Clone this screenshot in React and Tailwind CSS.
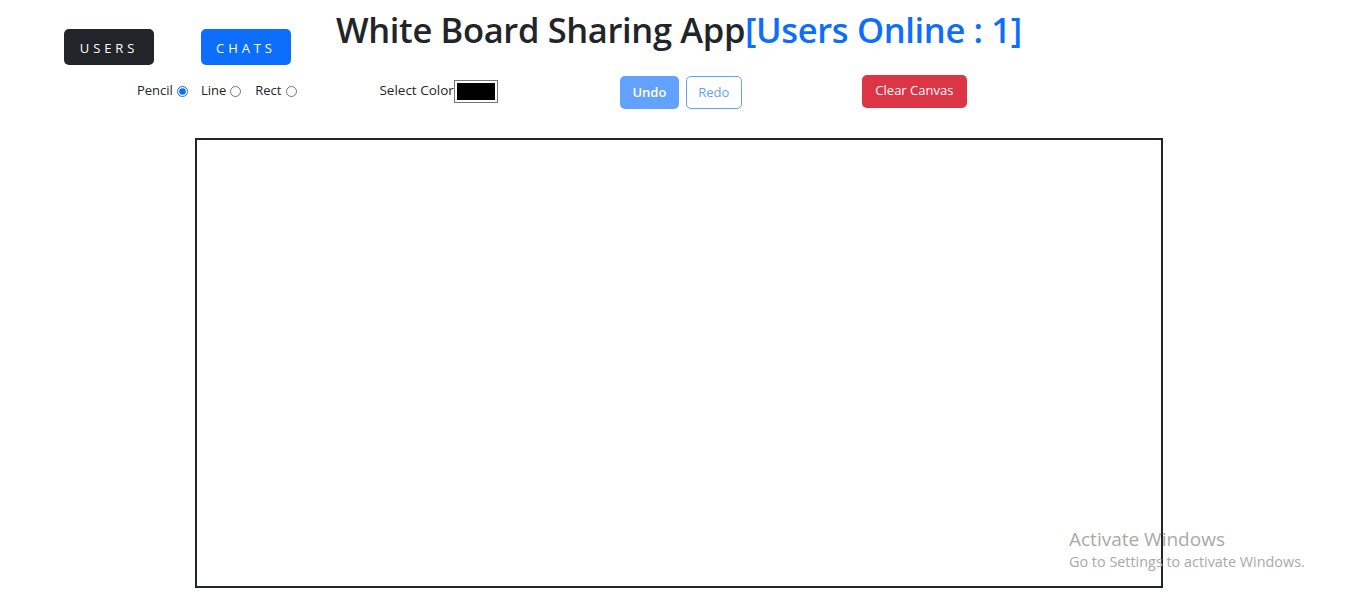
import React, { useState } from "react";

const font = { fontFamily: '"Open Sans", "Noto Sans", sans-serif' };

const App = () => {
  const [tool, setTool] = useState("pencil");
  const usersOnline = 1;

  return (
    <div className="relative min-h-[601px] bg-white text-[#212529]" style={font}>
      {/* top row */}
      <div className="flex items-start pl-[64px]">
        <button className="mt-[29px] h-[36px] w-[90px] rounded-[5px] bg-[#212529] pt-[3px] text-[13px] tracking-[0.3em] text-white">
          USERS
        </button>
        <button className="ml-[47px] mt-[29px] h-[36px] w-[90px] rounded-[5px] bg-[#0d6efd] pt-[3px] text-[13px] tracking-[0.3em] text-white">
          CHATS
        </button>
        <h1 className="ml-[45px] mt-[6px] text-[34.5px] leading-[48px] font-semibold tracking-[-0.01em]">
          White Board Sharing App
          <span className="text-[#0d6efd]">[Users Online : {usersOnline}]</span>
        </h1>
      </div>

      {/* tools row */}
      <div className="mt-[8px] flex h-[36px] items-center pl-[137px] text-[13px]">
        <label className="flex items-center">
          Pencil
          <input
            type="radio"
            name="tool"
            checked={tool === "pencil"}
            onChange={() => setTool("pencil")}
            className="ml-[4px] h-[11px] w-[11px] accent-[#0d6efd]"
          />
        </label>
        <label className="ml-[13px] flex items-center">
          Line
          <input
            type="radio"
            name="tool"
            checked={tool === "line"}
            onChange={() => setTool("line")}
            className="ml-[4px] h-[11px] w-[11px] accent-[#0d6efd]"
          />
        </label>
        <label className="ml-[14px] flex items-center">
          Rect
          <input
            type="radio"
            name="tool"
            checked={tool === "rect"}
            onChange={() => setTool("rect")}
            className="ml-[5px] h-[11px] w-[11px] accent-[#0d6efd]"
          />
        </label>
        <div className="ml-[82px] flex items-center">
          <span className="text-[13.5px] -translate-y-[1px]">Select Color</span>
          <div className="h-[23px] w-[44px] border border-[#767676] bg-white p-[2px]">
            <div className="h-full w-full bg-black" />
          </div>
        </div>
        <button
          disabled
          className="ml-[122px] mt-[3px] h-[33px] w-[59px] rounded-[5px] bg-[#62a1fe] text-[13px] font-semibold text-white"
        >
          Undo
        </button>
        <button
          disabled
          className="ml-[7px] mt-[3px] h-[33px] w-[56px] rounded-[5px] border border-[#62a1fe] bg-white text-[13px] text-[#62a1fe]"
        >
          Redo
        </button>
        <button className="ml-[120px] h-[33px] w-[105px] rounded-[5px] bg-[#dc3545] text-[13px] text-white">
          Clear Canvas
        </button>
      </div>

      {/* canvas */}
      <div className="mt-[29px] pl-[195px]">
        <div className="h-[450px] w-[968px] border-2 border-[#212529] bg-white" />
      </div>

      {/* windows watermark */}
      <div className="pointer-events-none absolute left-[1069px] top-[527px] text-[#a9a9a9]">
        <div className="text-[19px] leading-[25px]">Activate Windows</div>
        <div className="text-[14.4px] leading-[20px]">Go to Settings to activate Windows.</div>
      </div>
    </div>
  );
};

export default App;
